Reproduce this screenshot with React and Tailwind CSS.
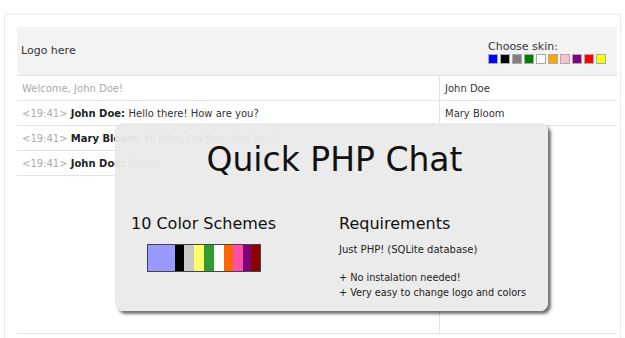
const skins = ["#0000ff", "#000000", "#808080", "#008000", "#ffffff", "#ffa500", "#ffc0cb", "#800080", "#ff0000", "#ffff00"];

// color scheme strip in the promo box
const schemes = [
  { c: "#9999ff", w: "w-[27px]" },
  { c: "#000000", w: "w-[9px]" },
  { c: "#c8c8c8", w: "w-[10px]" },
  { c: "#ffff66", w: "w-[10px]" },
  { c: "#339933", w: "w-[10px]" },
  { c: "#ffffff", w: "w-[10px]" },
  { c: "#ff6600", w: "w-[9px]" },
  { c: "#ff4fa8", w: "w-[10px]" },
  { c: "#800080", w: "w-[8px]" },
  { c: "#8b0000", w: "w-[9px]" },
];

const messages = [
  { time: "<19:41>", name: "John Doe:", text: "Hello there! How are you?" },
  { time: "<19:41>", name: "Mary Bloom:", text: "Hi John, I'm fine. And you?" },
  { time: "<19:41>", name: "John Doe:", text: "Great!" },
];

export default function App() {
  return (
    <div className="relative w-[625px] h-[338px] overflow-hidden bg-white pt-[14px] pl-[4px] pr-[4px] font-['DejaVu_Sans',sans-serif]">
      <div className="h-[330px] border-l border-t border-r border-[#ebebeb] pl-[12px] pr-[3px] pt-[12px]">
        {/* Header */}
        <div className="flex items-center justify-between h-[49px] bg-[#f3f3f3] border-b border-[#e3e3e3] pl-[4px] pr-[11px]">
          <span className="text-[11px] text-[#333]">Logo here</span>
          <div className="flex flex-col pt-[2px]">
            <span className="text-[11px] leading-[12px] text-[#333]">Choose skin:</span>
            <div className="flex gap-[2px] mt-[1px]">
              {skins.map((c) => (
                <div key={c} className="w-[10px] h-[10px] border border-[#aaa]" style={{ backgroundColor: c }} />
              ))}
            </div>
          </div>
        </div>

        {/* Chat body */}
        <div className="flex h-[258px] border-b border-[#e3e3e3]">
          <div className="w-[422px] text-[10px]">
            <div className="h-[25px] flex items-center pl-[5px] border-b border-[#e3e3e3] text-[#aaa]">Welcome, John Doe!</div>
            {messages.map((m, i) => (
              <div key={i} className="h-[25px] flex items-center pl-[5px] border-b border-[#e3e3e3] whitespace-pre">
                <span className="text-[#aaa]">{m.time} </span>
                <span className="font-bold text-[#222]">{m.name} </span>
                <span className="text-[#333]">{m.text}</span>
              </div>
            ))}
          </div>
          <div className="flex-1 border-l border-[#e3e3e3] text-[10px] text-[#333]">
            <div className="h-[25px] flex items-center pl-[5px] border-b border-[#e3e3e3]">John Doe</div>
            <div className="h-[25px] flex items-center pl-[5px] border-b border-[#e3e3e3]">Mary Bloom</div>
          </div>
        </div>
      </div>

      {/* Promo overlay */}
      <div className="absolute left-[115px] top-[123px] w-[433px] h-[188px] rounded-[8px] bg-[#eaeaea]/95 shadow-[3px_3px_3px_rgba(0,0,0,0.55)]">
        <div className="text-center text-[33px] leading-none text-[#111] pt-[20px] pl-[6px]">Quick PHP Chat</div>
        <div className="flex mt-[40px]">
          <div className="w-[224px] pl-[16px]">
            <div className="text-[16px] leading-none text-[#111]">10 Color Schemes</div>
            <div className="flex mt-[12px] ml-[16px] w-fit border border-[#444] h-[28px]">
              {schemes.map((s, i) => (
                <div key={i} className={s.w} style={{ backgroundColor: s.c }} />
              ))}
            </div>
          </div>
          <div className="text-[#222]">
            <div className="text-[16px] leading-none text-[#111]">Requirements</div>
            <div className="text-[10px] mt-[10px]">Just PHP! (SQLite database)</div>
            <div className="text-[9.7px] mt-[13px] leading-[15px]">+ No instalation needed!</div>
            <div className="text-[9.7px] leading-[15px]">+ Very easy to change logo and colors</div>
          </div>
        </div>
      </div>
    </div>
  );
}
